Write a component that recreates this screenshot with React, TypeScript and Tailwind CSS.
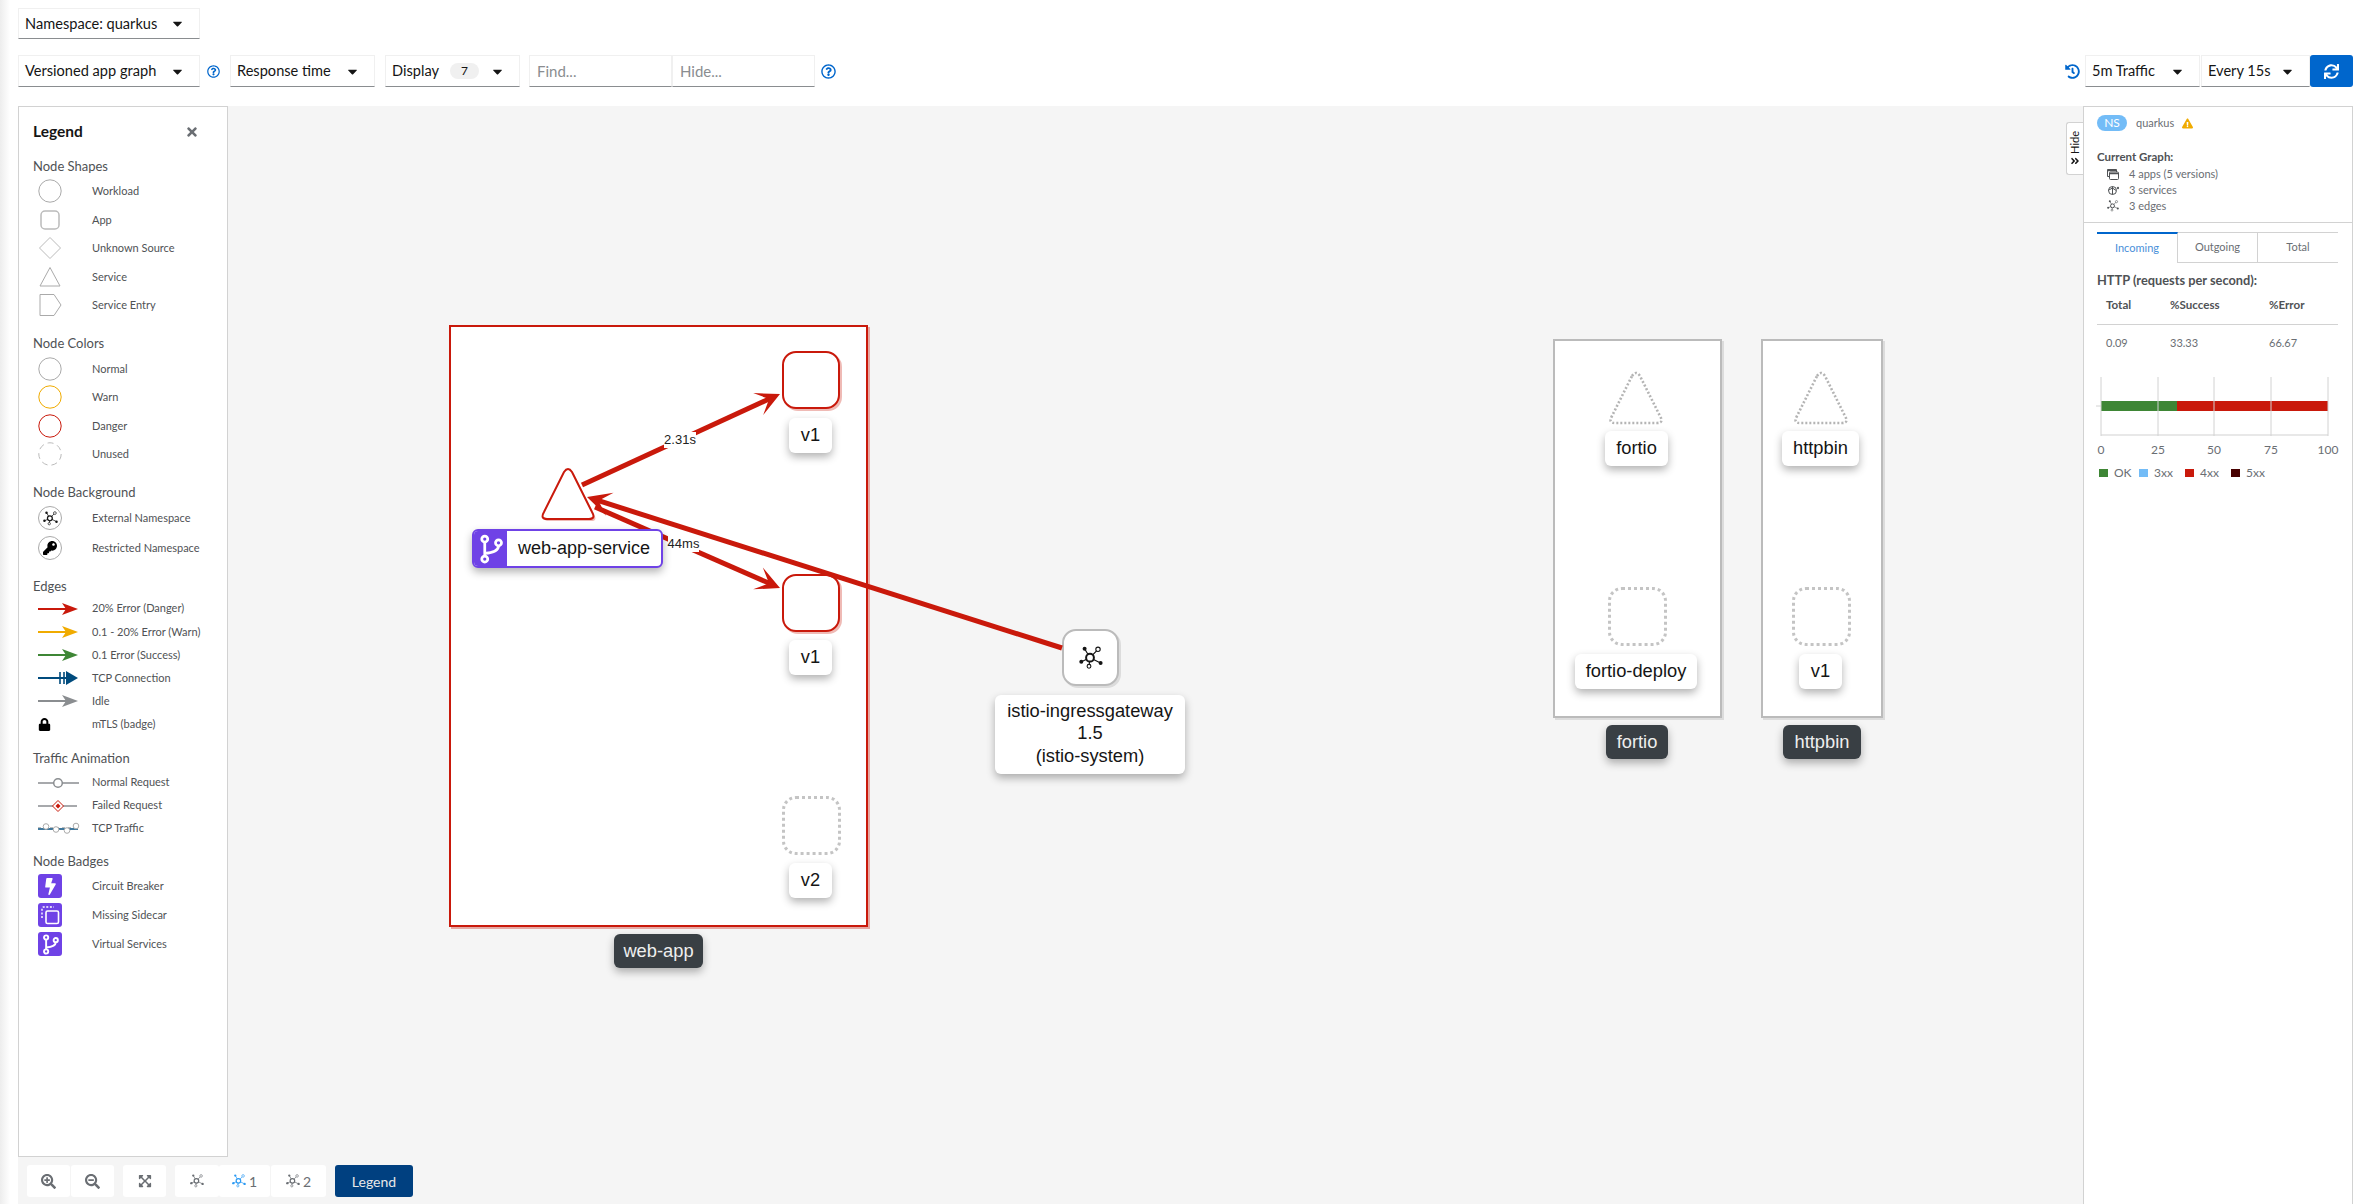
import React from "react";
import {
  FaAngleDoubleRight,
  FaBolt,
  FaCaretDown,
  FaExclamationTriangle,
  FaExpandArrowsAlt,
  FaHistory,
  FaKey,
  FaLock,
  FaRegQuestionCircle,
  FaSearchMinus,
  FaSearchPlus,
  FaSync,
  FaTimes,
} from "react-icons/fa";

const RED = "#c9190b";

const Topology = ({ size = 24, color = "#151515" }: { size?: number; color?: string }) => (
  <svg width={size} height={size} viewBox="0 0 24 24" fill="none">
    <g stroke={color} strokeWidth="1.2">
      <path d="M11 11.7 5.6 2.7M11 11.7 19 3.3M11 11.7 2.3 15.7M11 11.7 21.6 17M11 11.7 10 20.3" />
    </g>
    <circle cx="11" cy="11.7" r="3.9" fill="#fff" stroke={color} strokeWidth="2" />
    <circle cx="5.6" cy="2.7" r="2" fill={color} />
    <circle cx="19" cy="3.3" r="2.2" fill="#fff" stroke={color} strokeWidth="1.1" />
    <circle cx="2.3" cy="15.7" r="2" fill={color} />
    <circle cx="21.6" cy="17" r="2" fill={color} />
    <circle cx="10" cy="20.3" r="1.9" fill="#fff" stroke={color} strokeWidth="1.1" />
  </svg>
);

const Branch = ({ size }: { size: number }) => (
  <svg width={size} height={size} viewBox="0 0 24 24" fill="none" stroke="#fff" strokeWidth="2.2">
    <path d="M7 6V18M18 9.5Q18 14.5 7 15.5" />
    <circle cx="7" cy="4" r="2.4" fill="#6f42e6" />
    <circle cx="18" cy="7" r="2.4" fill="#6f42e6" />
    <circle cx="7" cy="20" r="2.4" fill="#6f42e6" />
  </svg>
);

const Select = ({
  label,
  className,
  children,
}: {
  label: string;
  className: string;
  children?: React.ReactNode;
}) => (
  <div
    className={`flex h-full items-center justify-between border border-[#f0f0f0] border-b-[#8a8d90] pl-[6px] pr-[14px] text-[14.6px] text-[#151515] ${className}`}
  >
    <span className="whitespace-nowrap">{label}</span>
    {children}
    <FaCaretDown className="text-[15px]" />
  </div>
);

const Help = () => <FaRegQuestionCircle className="text-[15px] text-[#06c]" />;

const Header = () => (
  <div className="h-[106px] shrink-0 px-[18px] pt-[8px]">
    <div className="h-[31px]">
      <Select label="Namespace: quarkus" className="w-[182px]" />
    </div>
    <div className="mt-[16px] flex h-[32px] items-center justify-between">
      <div className="flex h-full items-center">
        <Select label="Versioned app graph" className="w-[182px]" />
        <div className="ml-[7px] mr-[10px] flex w-[13px] justify-center">
          <Help />
        </div>
        <Select label="Response time" className="mr-[10px] w-[145px]" />
        <Select label="Display" className="mr-[9px] w-[135px]">
          <span className="ml-[11px] mr-auto flex h-[16px] w-[29px] items-center justify-center rounded-full bg-[#f0f0f0] text-[12px]">
            7
          </span>
        </Select>
        <div className="flex h-full w-[143px] items-center border border-[#f0f0f0] border-b-[#8a8d90] pl-[7px] text-[15px] text-[#8a8d90]">
          Find...
        </div>
        <div className="flex h-full w-[143px] items-center border border-[#f0f0f0] border-b-[#8a8d90] pl-[7px] text-[15px] text-[#8a8d90]">
          Hide...
        </div>
        <div className="ml-[6px]">
          <Help />
        </div>
      </div>
      <div className="flex h-full items-center">
        <FaHistory className="mr-[5px] text-[15px] text-[#06c]" />
        <Select label="5m Traffic" className="w-[115px]" />
        <Select label="Every 15s" className="ml-px w-[109px]" />
        <div className="flex h-full w-[43px] items-center justify-center rounded-[3px] bg-[#06c]">
          <FaSync className="text-[15px] text-white" />
        </div>
      </div>
    </div>
  </div>
);

const LegendIcon = ({ children }: { children: React.ReactNode }) => (
  <svg width="59" height="28" viewBox="0 0 59 28" fill="none" className="shrink-0 overflow-visible">
    {children}
  </svg>
);

const Row = ({
  label,
  className,
  icon,
}: {
  label: string;
  className: string;
  icon: React.ReactNode;
}) => (
  <div className={`flex items-center whitespace-nowrap text-[11px] text-[#4f5255] ${className}`}>
    <div className="flex w-[59px] shrink-0 items-center">{icon}</div>
    <span>{label}</span>
  </div>
);

const Heading = ({ children }: { children: React.ReactNode }) => (
  <div className="flex h-[20px] items-center text-[13px] text-[#4f5255]">{children}</div>
);

const Circle = ({ color, dashed }: { color: string; dashed?: boolean }) => (
  <LegendIcon>
    <circle cx="17" cy="14" r="11.2" stroke={color} strokeDasharray={dashed ? "6 4" : undefined} />
  </LegendIcon>
);

const LegendArrow = ({ color, tcp }: { color: string; tcp?: boolean }) => (
  <LegendIcon>
    <path d="M5 14H36" stroke={color} strokeWidth="2" />
    {tcp ? (
      <>
        <path d="M27 8V20M31 8V20" stroke={color} strokeWidth="1.6" />
        <path d="M45 14 33 7V21Z" fill={color} />
      </>
    ) : (
      <path d="M45 14 29 8 33 14 29 20Z" fill={color} />
    )}
  </LegendIcon>
);

const NsCircle = ({ children }: { children: React.ReactNode }) => (
  <div className="ml-[5px] flex h-[24px] w-[24px] items-center justify-center rounded-full border border-[#aaa] bg-white">
    {children}
  </div>
);

const Badge = ({ children }: { children: React.ReactNode }) => (
  <div className="ml-[5px] flex h-[24px] w-[24px] items-center justify-center rounded-[3px] bg-[#6f42e6] text-white">
    {children}
  </div>
);

const Legend = () => (
  <div className="relative h-[1051px] w-[210px] shrink-0 border border-[#d2d2d2] bg-white pl-[14px] pt-[13px]">
    <div className="flex h-[24px] w-[166px] items-center justify-between text-[15.5px] font-bold text-[#151515]">
      Legend
      <FaTimes className="text-[14px] text-[#6a6e73]" />
    </div>

    <div className="mt-[13px]">
      <Heading>Node Shapes</Heading>
      <Row
        label="Workload"
        className="h-[28.5px]"
        icon={
          <LegendIcon>
            <circle cx="17" cy="14" r="11.2" stroke="#aaa" />
          </LegendIcon>
        }
      />
      <Row
        label="App"
        className="h-[28.5px]"
        icon={
          <LegendIcon>
            <rect x="8" y="5" width="18" height="18" rx="4" stroke="#bbb" strokeWidth="1.5" />
          </LegendIcon>
        }
      />
      <Row
        label="Unknown Source"
        className="h-[28.5px]"
        icon={
          <LegendIcon>
            <path d="M17 3.5 27.5 14 17 24.5 6.5 14Z" stroke="#bbb" strokeLinejoin="round" />
          </LegendIcon>
        }
      />
      <Row
        label="Service"
        className="h-[28.5px]"
        icon={
          <LegendIcon>
            <path d="M17 4.5 27 23H7Z" stroke="#aaa" strokeLinejoin="round" />
          </LegendIcon>
        }
      />
      <Row
        label="Service Entry"
        className="h-[28.5px]"
        icon={
          <LegendIcon>
            <path d="M7 3.5H21L28 14 21 24.5H7Z" stroke="#aaa" strokeLinejoin="round" />
          </LegendIcon>
        }
      />
    </div>

    <div className="mt-[14px]">
      <Heading>Node Colors</Heading>
      <div className="pt-[1px]">
        <Row label="Normal" className="h-[28.5px]" icon={<Circle color="#aaa" />} />
        <Row label="Warn" className="h-[28.5px]" icon={<Circle color="#f0ab00" />} />
        <Row label="Danger" className="h-[28.5px]" icon={<Circle color={RED} />} />
        <Row label="Unused" className="h-[28.5px]" icon={<Circle color="#bbb" dashed />} />
      </div>
    </div>

    <div className="mt-[14.5px]">
      <Heading>Node Background</Heading>
      <Row
        label="External Namespace"
        className="h-[30px]"
        icon={
          <NsCircle>
            <Topology size={15} />
          </NsCircle>
        }
      />
      <Row
        label="Restricted Namespace"
        className="h-[30px]"
        icon={
          <NsCircle>
            <FaKey className="text-[14px] text-black" />
          </NsCircle>
        }
      />
    </div>

    <div className="mt-[13.5px]">
      <Heading>Edges</Heading>
      <div className="pt-[0.5px]">
        <Row label="20% Error (Danger)" className="h-[23.2px]" icon={<LegendArrow color={RED} />} />
        <Row label="0.1 - 20% Error (Warn)" className="h-[23.2px]" icon={<LegendArrow color="#f0ab00" />} />
        <Row label="0.1 Error (Success)" className="h-[23.2px]" icon={<LegendArrow color="#3e8635" />} />
        <Row label="TCP Connection" className="h-[23.2px]" icon={<LegendArrow color="#004b7d" tcp />} />
        <Row label="Idle" className="h-[23.2px]" icon={<LegendArrow color="#8a8d90" />} />
        <Row label="mTLS (badge)" className="h-[23.2px]" icon={<FaLock className="ml-[5px] text-[13px] text-black" />} />
      </div>
    </div>

    <div className="mt-[13px]">
      <Heading>Traffic Animation</Heading>
      <div className="pt-[2px]">
        <Row
          label="Normal Request"
          className="h-[23px]"
          icon={
            <LegendIcon>
              <path d="M5 14H46" stroke="#8a8d90" strokeWidth="1.5" />
              <circle cx="25" cy="14" r="4.3" fill="#fff" stroke="#8a8d90" strokeWidth="1.5" />
            </LegendIcon>
          }
        />
        <Row
          label="Failed Request"
          className="h-[23px]"
          icon={
            <LegendIcon>
              <path d="M5 14H44" stroke="#8a8d90" strokeWidth="1.5" />
              <path d="M25 8.5 30.5 14 25 19.5 19.5 14Z" fill="#fff" stroke={RED} />
              <path d="M25 11.5 27.5 14 25 16.5 22.5 14Z" fill={RED} />
            </LegendIcon>
          }
        />
        <Row
          label="TCP Traffic"
          className="h-[23px]"
          icon={
            <LegendIcon>
              <path d="M5 14H45" stroke="#004b7d" strokeWidth="1.5" />
              <path d="M5 12.5H45" stroke="#bbb" strokeWidth="1" strokeDasharray="3 3" />
              <g fill="#fff" stroke="#aaa">
                <circle cx="13" cy="11.5" r="2.8" />
                <circle cx="23" cy="14.5" r="2.8" />
                <circle cx="34" cy="15.5" r="2.8" />
                <circle cx="43" cy="11" r="2.8" />
              </g>
            </LegendIcon>
          }
        />
      </div>
    </div>

    <div className="mt-[11.5px]">
      <Heading>Node Badges</Heading>
      <Row
        label="Circuit Breaker"
        className="h-[29px]"
        icon={
          <Badge>
            <FaBolt className="text-[17px]" />
          </Badge>
        }
      />
      <Row
        label="Missing Sidecar"
        className="h-[29px]"
        icon={
          <Badge>
            <svg width="20" height="20" viewBox="0 0 20 20" fill="none" stroke="#fff">
              <path d="M2 13V3.5A1.5 1.5 0 0 1 3.5 2H14" strokeWidth="1.4" strokeDasharray="2 1.6" />
              <rect x="6" y="6" width="12.5" height="12.5" rx="1.5" strokeWidth="1.6" />
            </svg>
          </Badge>
        }
      />
      <Row
        label="Virtual Services"
        className="h-[29px]"
        icon={
          <Badge>
            <Branch size={21} />
          </Badge>
        }
      />
    </div>
  </div>
);

const ToolButton = ({ className, children }: { className: string; children: React.ReactNode }) => (
  <div className={`flex h-[32px] items-center justify-center rounded-[3px] bg-white text-[#6a6e73] ${className}`}>
    {children}
  </div>
);

const Toolbar = () => (
  <div className="mt-[8px] flex items-center pl-[9px]">
    <ToolButton className="w-[43px]">
      <FaSearchPlus className="text-[15px]" />
    </ToolButton>
    <ToolButton className="ml-px w-[43px]">
      <FaSearchMinus className="text-[15px]" />
    </ToolButton>
    <ToolButton className="ml-[9px] w-[43px]">
      <FaExpandArrowsAlt className="text-[14px]" />
    </ToolButton>
    <ToolButton className="ml-[9px] w-[44px]">
      <Topology size={14} color="#6a6e73" />
    </ToolButton>
    <ToolButton className="w-[51px] gap-[3px] text-[14px]">
      <Topology size={14} color="#2b9af3" />1
    </ToolButton>
    <ToolButton className="ml-px w-[55px] gap-[3px] text-[14px]">
      <Topology size={14} color="#6a6e73" />2
    </ToolButton>
    <div className="ml-[9px] flex h-[32px] w-[78px] items-center justify-center rounded-[3px] bg-[#004080] text-[14px] text-[#e8e8e8]">
      Legend
    </div>
  </div>
);

const triPath = (cx: number, top: number) =>
  `M${cx - 4} ${top + 3}Q${cx} ${top - 3} ${cx + 4} ${top + 3}L${cx + 24} ${top + 43}Q${cx + 28} ${top + 50} ${cx + 21} ${top + 50}L${cx - 21} ${top + 50}Q${cx - 28} ${top + 50} ${cx - 24} ${top + 43}Z`;

const Edge = ({ x1, y1, x2, y2 }: { x1: number; y1: number; x2: number; y2: number }) => {
  const len = Math.hypot(x2 - x1, y2 - y1);
  const ux = (x2 - x1) / len;
  const uy = (y2 - y1) / len;
  const pt = (back: number, side: number) =>
    `${x2 - ux * back - uy * side},${y2 - uy * back + ux * side}`;
  return (
    <g>
      <line x1={x1} y1={y1} x2={x2 - ux * 8} y2={y2 - uy * 8} stroke={RED} strokeWidth="5" />
      <polygon points={`${x2},${y2} ${pt(24, 12)} ${pt(12, 0)} ${pt(24, -12)}`} fill={RED} />
    </g>
  );
};

const nodeLabel =
  "absolute flex items-center justify-center rounded-[6px] bg-white pb-[2px] text-[18.3px] text-[#151515] shadow-[0_4px_8px_rgba(0,0,0,0.3)]";
const groupLabel =
  "absolute flex items-center justify-center rounded-[6px] bg-[#393f44] pb-[1px] text-[18.3px] text-[#eee] shadow-[0_4px_8px_rgba(0,0,0,0.3)]";
const dangerNode =
  "absolute rounded-[14px] border-2 border-[#c9190b] bg-white shadow-[2px_2px_0_rgba(201,25,11,0.3)]";
const unusedNode = "absolute rounded-[14px] border-[3px] border-dotted border-[#c4c4c4] bg-white";
const plainBox = "absolute border-2 border-[#bbb] bg-white shadow-[2px_2px_0_rgba(0,0,0,0.1)]";

const Graph = () => (
  <div className="absolute inset-0 font-['Liberation_Sans',sans-serif]">
    <div className="absolute left-[431px] top-[219px] h-[602px] w-[419px] border-2 border-[#c9190b] bg-white shadow-[2px_2px_0_rgba(201,25,11,0.35)]" />
    <div className={`${plainBox} left-[1535px] top-[233px] h-[379px] w-[169px]`} />
    <div className={`${plainBox} left-[1743px] top-[233px] h-[379px] w-[122px]`} />

    <div className={`${dangerNode} left-[764px] top-[245px] h-[58px] w-[58px]`} />
    <div className={`${dangerNode} left-[764px] top-[468px] h-[58px] w-[58px]`} />
    <div className={`${unusedNode} left-[764px] top-[690px] h-[59px] w-[59px]`} />
    <div className={`${unusedNode} left-[1590px] top-[481px] h-[59px] w-[59px]`} />
    <div className={`${unusedNode} left-[1774px] top-[481px] h-[59px] w-[59px]`} />
    <div className="absolute left-[1044px] top-[523px] flex h-[57px] w-[57px] items-center justify-center rounded-[14px] border-2 border-[#bbb] bg-white shadow-[2px_2px_0_rgba(0,0,0,0.1)]">
      <Topology />
    </div>

    <svg className="absolute inset-0 h-full w-full" fill="none">
      <g transform="translate(-18 -106)">
        <path d={triPath(570, 471)} fill="rgba(201,25,11,0.3)" />
        <path d={triPath(568, 469)} fill="#fff" stroke={RED} strokeWidth="2" />
        <path d={triPath(1636, 373)} fill="#fff" stroke="#b4b4b4" strokeWidth="2.6" strokeDasharray="2 2" />
        <path d={triPath(1821, 373)} fill="#fff" stroke="#b4b4b4" strokeWidth="2.6" strokeDasharray="2 2" />
        <Edge x1={582} y1={485} x2={780} y2={394} />
        <Edge x1={595} y1={507} x2={780} y2={588} />
        <Edge x1={1062} y1={648} x2={587} y2={497} />
      </g>
    </svg>

    <div className="absolute left-[646px] top-[326px] flex h-[16px] w-[32px] items-center justify-center bg-white text-[13px] text-[#222]">
      2.31s
    </div>
    <div className="absolute left-[650px] top-[430px] flex h-[16px] w-[31px] items-center justify-center bg-white text-[13px] text-[#222]">
      44ms
    </div>

    <div className="absolute left-[454px] top-[423px] flex h-[39px] w-[191px] overflow-hidden rounded-[6px] border-2 border-[#6f42e6] bg-white text-[18px] text-[#151515] shadow-[0_4px_8px_rgba(0,0,0,0.3)]">
      <div className="flex w-[33px] items-center justify-center bg-[#6f42e6] text-white">
        <Branch size={30} />
      </div>
      <div className="flex flex-1 items-center justify-center">web-app-service</div>
    </div>

    <div className={`${nodeLabel} left-[771px] top-[312px] h-[35px] w-[43px]`}>v1</div>
    <div className={`${nodeLabel} left-[771px] top-[534px] h-[35px] w-[43px]`}>v1</div>
    <div className={`${nodeLabel} left-[771px] top-[757px] h-[35px] w-[43px]`}>v2</div>
    <div className={`${nodeLabel} left-[977px] top-[589px] h-[79px] w-[190px] flex-col leading-[22.5px]`}>
      <span>istio-ingressgateway</span>
      <span>1.5</span>
      <span>(istio-system)</span>
    </div>
    <div className={`${nodeLabel} left-[1587px] top-[325px] h-[35px] w-[63px]`}>fortio</div>
    <div className={`${nodeLabel} left-[1764px] top-[325px] h-[35px] w-[77px]`}>httpbin</div>
    <div className={`${nodeLabel} left-[1557px] top-[548px] h-[35px] w-[122px]`}>fortio-deploy</div>
    <div className={`${nodeLabel} left-[1781px] top-[548px] h-[35px] w-[43px]`}>v1</div>

    <div className={`${groupLabel} left-[596px] top-[828px] h-[34px] w-[89px]`}>web-app</div>
    <div className={`${groupLabel} left-[1588px] top-[619px] h-[34px] w-[62px]`}>fortio</div>
    <div className={`${groupLabel} left-[1765px] top-[619px] h-[34px] w-[78px]`}>httpbin</div>
  </div>
);

const Chart = () => (
  <svg width="250" height="84" className="mt-[23px] overflow-visible text-[12px]" fill="none">
    <path d="M4 60H231" stroke="#e8e8e8" strokeWidth="2" />
    <path d="M-1 31H4" stroke="#d2d2d2" />
    <rect x="4" y="26" width="76" height="10" fill="#3e8635" />
    <rect x="80" y="26" width="151" height="10" fill={RED} />
    <path d="M4 2V61M61 2V61M117 2V61M174 2V61M231 2V61" stroke="#d2d2d2" />
    <g fill="#6a6e73" textAnchor="middle">
      <text x="4" y="79">0</text>
      <text x="61" y="79">25</text>
      <text x="117" y="79">50</text>
      <text x="174" y="79">75</text>
      <text x="231" y="79">100</text>
    </g>
  </svg>
);

const LegendKey = ({ color, label, className }: { color: string; label: string; className: string }) => (
  <div className={`flex items-center gap-[6px] ${className}`}>
    <span className={`h-[8px] w-[9px] ${color}`} />
    <span>{label}</span>
  </div>
);

const SidePanel = () => (
  <div className="h-full w-[270px] shrink-0 border-x border-t border-[#d2d2d2] bg-white text-[11px] text-[#6a6e73]">
    <div className="h-[116px] border-b border-[#d2d2d2] pl-[13px] pt-[8px]">
      <div className="flex h-[16px] items-center">
        <span className="flex h-[16px] w-[30px] items-center justify-center rounded-full bg-[#73bcf7] text-[12px] text-white">
          NS
        </span>
        <span className="ml-[9px]">quarkus</span>
        <FaExclamationTriangle className="ml-[8px] text-[11px] text-[#f0ab00]" />
      </div>
      <div className="mt-[18px] flex h-[16px] items-center text-[11.5px] font-bold text-[#4f5255]">Current Graph:</div>
      <div className="mt-[1px] pl-[10px]">
        <div className="flex h-[16px] items-center">
          <svg width="12" height="11" viewBox="0 0 12 11" fill="none" stroke="#4f5255" className="mr-[10px]">
            <path d="M2.5 7.5H.5V.5H9.5V3" />
            <rect x="2.5" y="3" width="9" height="7.5" rx="1" />
            <path d="M.5 1.5H9.5M2.5 4.5H11.5" strokeWidth="1.6" />
          </svg>
          4 apps (5 versions)
        </div>
        <div className="flex h-[16px] items-center">
          <svg width="12" height="11" viewBox="0 0 12 11" fill="none" stroke="#4f5255" className="mr-[10px]">
            <circle cx="5.5" cy="5.5" r="4" />
            <path d="M5.5 1.5V9.5M1 5.5 5.5 3 9 5.5" />
            <circle cx="11" cy="3" r=".8" fill="#4f5255" />
          </svg>
          3 services
        </div>
        <div className="flex h-[16px] items-center">
          <span className="mr-[10px]">
            <Topology size={12} color="#4f5255" />
          </span>
          3 edges
        </div>
      </div>
    </div>
    <div className="pl-[13px] pr-[14px] pt-[9px]">
      <div className="flex h-[31px] items-center text-center">
        <div className="flex h-full w-[81px] items-center justify-center border-r border-t-2 border-r-[#d2d2d2] border-t-[#06c] text-[#4a90d9]">
          Incoming
        </div>
        <div className="flex h-full w-[80px] items-center justify-center border-y border-r border-[#d2d2d2]">
          Outgoing
        </div>
        <div className="flex h-full flex-1 items-center justify-center border-y border-[#d2d2d2]">Total</div>
      </div>
      <div className="mt-[10px] flex h-[16px] items-center whitespace-nowrap text-[12.8px] font-bold text-[#4f5255]">
        HTTP (requests per second):
      </div>
      <div className="mt-[7px] grid grid-cols-[64px_99px_1fr] border-b border-[#d2d2d2] pb-[11px] pl-[9px] text-[11.6px] font-bold text-[#4f5255]">
        <span>Total</span>
        <span>%Success</span>
        <span>%Error</span>
      </div>
      <div className="mt-[10px] grid grid-cols-[64px_99px_1fr] pl-[9px]">
        <span>0.09</span>
        <span>33.33</span>
        <span>66.67</span>
      </div>
      <Chart />
      <div className="mt-[6px] flex h-[16px] items-center pl-[2px] text-[12px] text-[#6a6e73]">
        <LegendKey color="bg-[#3e8635]" label="OK" className="w-[40px]" />
        <LegendKey color="bg-[#73bcf7]" label="3xx" className="w-[46px]" />
        <LegendKey color="bg-[#c9190b]" label="4xx" className="w-[46px]" />
        <LegendKey color="bg-[#470000]" label="5xx" className="w-[40px]" />
      </div>
    </div>
  </div>
);

const App = () => {
  return (
    <div className="relative flex h-[1204px] w-[2371px] flex-col overflow-hidden bg-white font-[Lato,sans-serif]">
      <div className="absolute inset-y-0 left-0 w-[10px] bg-gradient-to-r from-[#ededed] to-white" />
      <Header />
      <div className="flex min-h-0 flex-1 pl-[18px] pr-[18px]">
        <div className="relative flex-1 bg-[#f5f5f5]">
          <Graph />
          <div className="relative flex h-full flex-col">
            <Legend />
            <Toolbar />
          </div>
          <div className="absolute right-0 top-[16px] flex h-[53px] w-[17px] flex-col items-center justify-center gap-[3px] rounded-l-[3px] border border-r-0 border-[#d2d2d2] bg-white text-[#151515]">
            <span className="rotate-180 text-[11px] [writing-mode:vertical-rl]">Hide</span>
            <FaAngleDoubleRight className="text-[10px]" />
          </div>
        </div>
        <SidePanel />
      </div>
    </div>
  );
};

export default App;
